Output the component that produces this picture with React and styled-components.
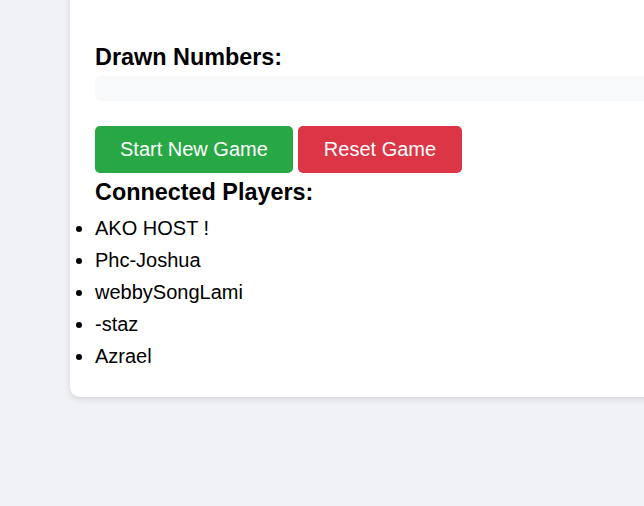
import React from "react";
import styled, { createGlobalStyle } from "styled-components";

const GlobalStyle = createGlobalStyle`
  html, body {
    margin: 0;
    padding: 0;
    background: #f0f2f5;
    font-family: "Liberation Sans", Arial, sans-serif;
    overflow: hidden;
  }
`;

const Page = styled.div`
  width: 644px;
  min-height: 506px;
  padding-left: 70px;
  box-sizing: border-box;
  overflow: hidden;
`;

const Card = styled.div`
  width: 700px;
  margin-top: -14px;
  padding: 58px 25px 25px;
  background: #fff;
  border-radius: 10px;
  box-shadow: 0 2px 6px rgba(0, 0, 0, 0.12);
  box-sizing: border-box;
`;

const Heading = styled.h3`
  margin: 0;
  font-size: 23.4px;
  line-height: 27px;
  font-weight: bold;
  color: #000;
`;

const NumbersBox = styled.div`
  height: 25px;
  margin: 5px 0 25px;
  background: #f8f9fa;
  border-radius: 6px;
`;

const ButtonRow = styled.div`
  display: flex;
  gap: 5px;
  margin-bottom: 6px;
`;

const Button = styled.button`
  border: none;
  border-radius: 5px;
  padding: 12px ${(props) => (props.danger ? "26px" : "25px")};
  font-family: inherit;
  font-size: 20px;
  line-height: 23px;
  color: #fff;
  background: ${(props) => (props.danger ? "#dc3545" : "#28a745")};
  cursor: pointer;
`;

const PlayerList = styled.ul`
  margin: 6px 0 0;
  padding: 0;
  list-style: disc outside;
`;

const Player = styled.li`
  font-size: 20px;
  line-height: 32px;
  color: #000;
`;

const players = ["AKO HOST !", "Phc-Joshua", "webbySongLami", "-staz", "Azrael"];

export default function App() {
  return (
    <>
      <GlobalStyle />
      <Page>
        <Card>
          <Heading>Drawn Numbers:</Heading>
          <NumbersBox />
          <ButtonRow>
            <Button>Start New Game</Button>
            <Button danger>Reset Game</Button>
          </ButtonRow>
          <Heading>Connected Players:</Heading>
          <PlayerList>
            {players.map((p) => (
              <Player key={p}>{p}</Player>
            ))}
          </PlayerList>
        </Card>
      </Page>
    </>
  );
}
